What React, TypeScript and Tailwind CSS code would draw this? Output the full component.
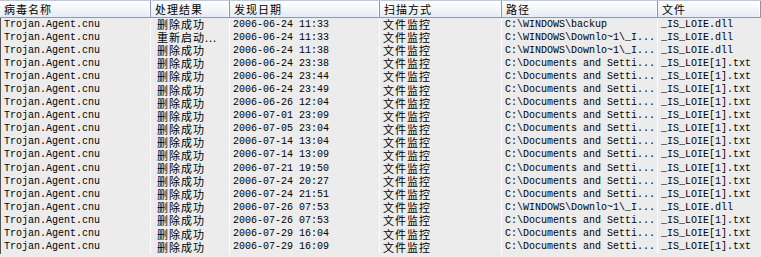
import React from "react";

type Row = { name: string; result: string; date: string; mode: string; path: string; file: string };

const cols = [
  { label: "病毒名称", w: "w-[151px]" },
  { label: "处理结果", w: "w-[79px]" },
  { label: "发现日期", w: "w-[150px]" },
  { label: "扫描方式", w: "w-[122px]" },
  { label: "路径", w: "w-[156px]" },
  { label: "文件", w: "flex-1" },
];

const W = "C:\\WINDOWS\\";
const DL = "C:\\WINDOWS\\Downlo~1\\_I...";
const DOC = "C:\\Documents and Setti...";

const rows: Row[] = [
  { name: "Trojan.Agent.cnu", result: "删除成功", date: "2006-06-24 11:33", mode: "文件监控", path: W + "backup", file: "_IS_LOIE.dll" },
  { name: "Trojan.Agent.cnu", result: "重新启动...", date: "2006-06-24 11:33", mode: "文件监控", path: DL, file: "_IS_LOIE.dll" },
  { name: "Trojan.Agent.cnu", result: "删除成功", date: "2006-06-24 11:38", mode: "文件监控", path: DL, file: "_IS_LOIE.dll" },
  { name: "Trojan.Agent.cnu", result: "删除成功", date: "2006-06-24 23:38", mode: "文件监控", path: DOC, file: "_IS_LOIE[1].txt" },
  { name: "Trojan.Agent.cnu", result: "删除成功", date: "2006-06-24 23:44", mode: "文件监控", path: DOC, file: "_IS_LOIE[1].txt" },
  { name: "Trojan.Agent.cnu", result: "删除成功", date: "2006-06-24 23:49", mode: "文件监控", path: DOC, file: "_IS_LOIE[1].txt" },
  { name: "Trojan.Agent.cnu", result: "删除成功", date: "2006-06-26 12:04", mode: "文件监控", path: DOC, file: "_IS_LOIE[1].txt" },
  { name: "Trojan.Agent.cnu", result: "删除成功", date: "2006-07-01 23:09", mode: "文件监控", path: DOC, file: "_IS_LOIE[1].txt" },
  { name: "Trojan.Agent.cnu", result: "删除成功", date: "2006-07-05 23:04", mode: "文件监控", path: DOC, file: "_IS_LOIE[1].txt" },
  { name: "Trojan.Agent.cnu", result: "删除成功", date: "2006-07-14 13:04", mode: "文件监控", path: DOC, file: "_IS_LOIE[1].txt" },
  { name: "Trojan.Agent.cnu", result: "删除成功", date: "2006-07-14 13:09", mode: "文件监控", path: DOC, file: "_IS_LOIE[1].txt" },
  { name: "Trojan.Agent.cnu", result: "删除成功", date: "2006-07-21 19:50", mode: "文件监控", path: DOC, file: "_IS_LOIE[1].txt" },
  { name: "Trojan.Agent.cnu", result: "删除成功", date: "2006-07-24 20:27", mode: "文件监控", path: DOC, file: "_IS_LOIE[1].txt" },
  { name: "Trojan.Agent.cnu", result: "删除成功", date: "2006-07-24 21:51", mode: "文件监控", path: DOC, file: "_IS_LOIE[1].txt" },
  { name: "Trojan.Agent.cnu", result: "删除成功", date: "2006-07-26 07:53", mode: "文件监控", path: DL, file: "_IS_LOIE.dll" },
  { name: "Trojan.Agent.cnu", result: "删除成功", date: "2006-07-26 07:53", mode: "文件监控", path: DOC, file: "_IS_LOIE[1].txt" },
  { name: "Trojan.Agent.cnu", result: "删除成功", date: "2006-07-29 16:04", mode: "文件监控", path: DOC, file: "_IS_LOIE[1].txt" },
  { name: "Trojan.Agent.cnu", result: "删除成功", date: "2006-07-29 16:09", mode: "文件监控", path: DOC, file: "_IS_LOIE[1].txt" },
];

const cjk = "font-['Noto_Sans_CJK_SC',sans-serif] text-[11px] tracking-[1px] leading-[12px]";
const mono = "font-['Liberation_Mono',monospace] text-[10px] leading-[12px]";

const App: React.FC = () => {
  return (
    <div className="w-[761px] h-[257px] bg-[#ececec] overflow-hidden text-black">
      {/* header */}
      <div className="flex h-[18px] border-t border-t-[#b9c9e4] border-b border-b-[#8c9bb0] bg-gradient-to-b from-white to-[#e6ebf3]">
        {cols.map((c, i) => (
          <div
            key={i}
            className={`${c.w} shrink-0 h-full flex items-center pl-[4px] pb-[1px] border-r border-r-[#8a97a8] shadow-[inset_-1px_0_0_#fff] ${cjk}`}
          >
            {c.label}
          </div>
        ))}
      </div>

      {/* rows */}
      <div className="border-l border-l-[#555]">
        {rows.map((r, i) => (
          <div key={i} className="flex h-[13.1px] items-center">
            <div className={`w-[150px] shrink-0 pl-[3px] border-r border-r-white ${mono}`}>{r.name}</div>
            <div className={`w-[79px] shrink-0 pl-[6px] pb-[1px] border-r border-r-white ${cjk}`}>{r.result}</div>
            <div className={`w-[150px] shrink-0 pl-[3px] border-r border-r-white ${mono}`}>{r.date}</div>
            <div className={`w-[122px] shrink-0 pl-[3px] pb-[1px] border-r border-r-white ${cjk}`}>{r.mode}</div>
            <div className={`w-[156px] shrink-0 pl-[3px] border-r border-r-white whitespace-pre ${mono}`}>{r.path}</div>
            <div className={`flex-1 pl-[3px] ${mono}`}>{r.file}</div>
          </div>
        ))}
      </div>
    </div>
  );
};

export default App;
